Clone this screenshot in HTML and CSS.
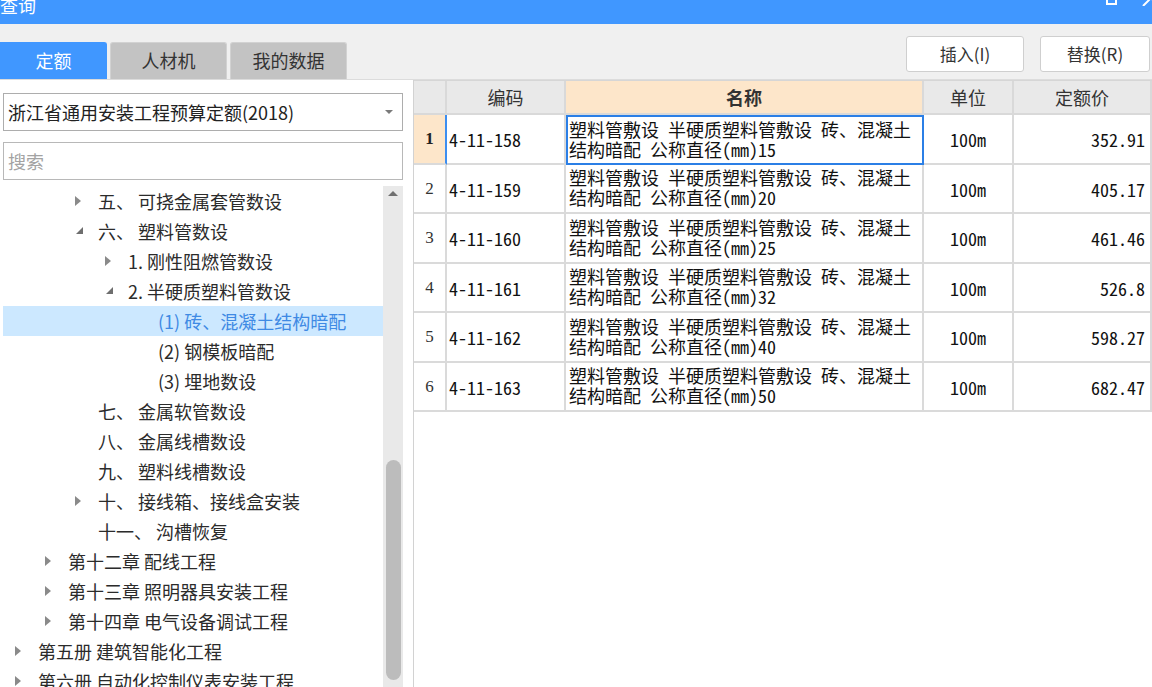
FILE: index.html
```html
<!DOCTYPE html>
<html lang="zh-CN">
<head>
<meta charset="utf-8">
<title>查询</title>
<link rel="stylesheet" href="styles.css">
</head>
<body>
<div class="window">
  <div class="titlebar">
    <span class="title">查询</span>
    <svg class="win-controls" width="60" height="16" viewBox="0 0 60 16">
      <rect x="15" y="2" width="9" height="12" fill="none" stroke="#fff" stroke-width="2"/>
      <path d="M51 16 L67 0 M51 0 L67 16" stroke="#fff" stroke-width="2" fill="none"/>
    </svg>
  </div>
  <div class="toolbar">
    <div class="tabs">
      <div class="tab active">定额</div>
      <div class="tab">人材机</div>
      <div class="tab">我的数据</div>
    </div>
    <div class="actions">
      <button class="btn btn-insert">插入(I)</button>
      <button class="btn btn-replace">替换(R)</button>
    </div>
  </div>
  <div class="main">
    <aside class="left">
      <div class="select">
        <span class="select-text">浙江省通用安装工程预算定额(2018)</span>
        <i class="select-arrow"></i>
      </div>
      <div class="search">搜索</div>
      <div class="tree-wrap">
        <ul class="tree">
          <li class="node l2"><i class="tw closed"></i><span>五、 可挠金属套管数设</span></li>
          <li class="node l2"><i class="tw open"></i><span>六、 塑料管数设</span></li>
          <li class="node l3"><i class="tw closed"></i><span>1. 刚性阻燃管数设</span></li>
          <li class="node l3"><i class="tw open"></i><span>2. 半硬质塑料管数设</span></li>
          <li class="node l4 selected"><i class="tw"></i><span>(1) 砖、混凝土结构暗配</span></li>
          <li class="node l4"><i class="tw"></i><span>(2) 钢模板暗配</span></li>
          <li class="node l4"><i class="tw"></i><span>(3) 埋地数设</span></li>
          <li class="node l2"><i class="tw"></i><span>七、 金属软管数设</span></li>
          <li class="node l2"><i class="tw"></i><span>八、 金属线槽数设</span></li>
          <li class="node l2"><i class="tw"></i><span>九、 塑料线槽数设</span></li>
          <li class="node l2"><i class="tw closed"></i><span>十、 接线箱、接线盒安装</span></li>
          <li class="node l2"><i class="tw"></i><span>十一、 沟槽恢复</span></li>
          <li class="node l1"><i class="tw closed"></i><span>第十二章 配线工程</span></li>
          <li class="node l1"><i class="tw closed"></i><span>第十三章 照明器具安装工程</span></li>
          <li class="node l1"><i class="tw closed"></i><span>第十四章 电气设备调试工程</span></li>
          <li class="node l0"><i class="tw closed"></i><span>第五册 建筑智能化工程</span></li>
          <li class="node l0"><i class="tw closed"></i><span>第六册 自动化控制仪表安装工程</span></li>
        </ul>
        <div class="vscroll">
          <i class="vs-up"></i>
          <div class="vs-thumb"></div>
        </div>
      </div>
    </aside>
    <section class="right">
      <div class="grid">
        <div class="hd rn"></div>
        <div class="hd">编码</div>
        <div class="hd name-hd">名称</div>
        <div class="hd">单位</div>
        <div class="hd">定额价</div>

        <div class="c rn rn-cur">1</div>
        <div class="c code">4-11-158</div>
        <div class="c name cur">塑料管敷设 半硬质塑料管敷设 砖、混凝土<br>结构暗配 公称直径(mm)15</div>
        <div class="c unit">100m</div>
        <div class="c price">352.91</div>

        <div class="c rn">2</div>
        <div class="c code">4-11-159</div>
        <div class="c name">塑料管敷设 半硬质塑料管敷设 砖、混凝土<br>结构暗配 公称直径(mm)20</div>
        <div class="c unit">100m</div>
        <div class="c price">405.17</div>

        <div class="c rn">3</div>
        <div class="c code">4-11-160</div>
        <div class="c name">塑料管敷设 半硬质塑料管敷设 砖、混凝土<br>结构暗配 公称直径(mm)25</div>
        <div class="c unit">100m</div>
        <div class="c price">461.46</div>

        <div class="c rn">4</div>
        <div class="c code">4-11-161</div>
        <div class="c name">塑料管敷设 半硬质塑料管敷设 砖、混凝土<br>结构暗配 公称直径(mm)32</div>
        <div class="c unit">100m</div>
        <div class="c price">526.8</div>

        <div class="c rn">5</div>
        <div class="c code">4-11-162</div>
        <div class="c name">塑料管敷设 半硬质塑料管敷设 砖、混凝土<br>结构暗配 公称直径(mm)40</div>
        <div class="c unit">100m</div>
        <div class="c price">598.27</div>

        <div class="c rn">6</div>
        <div class="c code">4-11-163</div>
        <div class="c name">塑料管敷设 半硬质塑料管敷设 砖、混凝土<br>结构暗配 公称直径(mm)50</div>
        <div class="c unit">100m</div>
        <div class="c price">682.47</div>
      </div>
    </section>
  </div>
</div>
</body>
</html>
```

FILE: styles.css
```css
* { box-sizing: border-box; margin: 0; padding: 0; }
html, body { width: 1152px; height: 687px; overflow: hidden; }
body {
  font-family: "Noto Sans CJK SC", "Noto Sans", sans-serif;
  background: #f0f0f0;
  color: #333;
}
.window { display: flex; flex-direction: column; height: 687px; }

/* title bar */
.titlebar {
  height: 24px; flex: none;
  background: #4097ff;
  display: flex; align-items: flex-start;
  overflow: hidden;
}
.title { color: #fff; font-size: 18px; line-height: 18px; margin-top: -4px; }
.win-controls { margin-left: auto; margin-top: -10px; display: block; }

/* toolbar */
.toolbar {
  height: 56px; flex: none;
  display: flex; align-items: flex-start;
  border-bottom: 1px solid #dcdcdc;
  background: #f0f0f0;
}
.tabs { display: flex; gap: 3px; margin-top: 18px; }
.tab {
  width: 117px; height: 37px;
  background: #c3c3c3;
  border: 1px solid #d2d2d2; border-bottom: none;
  border-radius: 3px 3px 0 0;
  font-size: 18px; line-height: 34px; text-align: center;
  color: #333;
}
.tab.active {
  width: 107px; background: #4097ff; border-color: #4097ff;
  color: #fff; border-radius: 0 3px 0 0;
}
.actions { margin-left: auto; margin-top: 12px; margin-right: 2px; display: flex; gap: 16px; }
.btn {
  height: 36px; width: 118px;
  background: #fff; border: 1px solid #cfcfcf; border-radius: 3px;
  font-family: "Noto Sans CJK SC", "Noto Sans", sans-serif;
  font-size: 17px; color: #333;
  padding-bottom: 2px;
}
.btn-replace { width: 110px; }

/* main */
.main { flex: 1; display: flex; min-height: 0; background: #fff; }
.left {
  width: 414px; flex: none;
  border-right: 1px solid #d2d2d2;
  padding-left: 3px;
  display: flex; flex-direction: column;
  background: #fff;
}
.select {
  margin-top: 13px; width: 400px; height: 38px;
  border: 1px solid #adadad;
  display: flex; align-items: center;
  padding-left: 4px;
}
.select-text { font-size: 18px; color: #222; }
.select-arrow {
  margin-left: auto; margin-right: 9px;
  width: 0; height: 0;
  border-left: 4px solid transparent; border-right: 4px solid transparent;
  border-top: 4px solid #7a7a7a;
}
.search {
  margin-top: 11px; width: 400px; height: 38px;
  border: 1px solid #b8b8b8;
  padding-left: 4px;
  font-size: 18px; line-height: 36px; color: #a3a3a3;
}
.tree-wrap { margin-top: 6px; flex: 1; min-height: 0; display: flex; overflow: hidden; }
.tree { list-style: none; width: 380px; flex: none; }
.node {
  height: 30px; display: flex; align-items: center;
  white-space: nowrap; font-size: 18px; color: #2b2b2b;
  padding-bottom: 1px;
}
.node.l0 { padding-left: 10px; }
.node.l1 { padding-left: 40px; }
.node.l2 { padding-left: 70px; }
.node.l3 { padding-left: 100px; }
.node.l4 { padding-left: 130px; }
.node.selected { background: #cce8ff; color: #3f8ae4; }
.tw { width: 25px; flex: none; height: 29px; display: flex; align-items: center; padding-left: 2px; }
.tw.closed::before {
  content: ""; width: 0; height: 0;
  border-left: 6px solid #8a8a8a;
  border-top: 5px solid transparent; border-bottom: 5px solid transparent;
}
.tw.open::before {
  content: ""; width: 0; height: 0; margin-left: 1px;
  border-bottom: 7px solid #6e6e6e;
  border-left: 7px solid transparent;
}
.vscroll {
  width: 20px; flex: none; background: #e9e9e9;
  display: flex; flex-direction: column; align-items: center;
}
.vs-up {
  margin-top: 5px; width: 0; height: 0;
  border-left: 5px solid transparent; border-right: 5px solid transparent;
  border-bottom: 5px solid #707070;
}
.vs-thumb {
  margin-top: 264px; width: 15px; height: 220px;
  background: #bcbcbc; border-radius: 8px;
}

/* right grid */
.right { flex: 1; min-width: 0; background: #fff; overflow: hidden; }
.grid {
  display: grid;
  grid-template-columns: 33px 119px 358px 90px 138px;
  grid-template-rows: 34px 50px 49px 50px 49px 50px 49px;
  border-top: 1px solid #d6d6d6;
}
.hd {
  background: #e9e9e9;
  border-right: 2px solid #d9d9d9; border-bottom: 2px solid #d9d9d9;
  font-size: 18px; color: #333;
  display: flex; align-items: center; justify-content: center;
}
.hd.name-hd { background: #fde6ca; font-weight: bold; }
.c {
  border-right: 2px solid #dadada; border-bottom: 2px solid #dadada;
  font-family: "Noto Sans Mono CJK SC", "Noto Sans CJK SC", monospace;
  font-size: 18px; color: #111;
  display: flex; align-items: center;
}
.c.rn {
  justify-content: center;
  font-family: "Liberation Serif", serif; font-size: 17px; color: #333;
}
.c.rn-cur { background: #fde6ca; font-weight: bold; color: #222; border-right-color: #3d8ef0; }
.c.code { padding-left: 2px; }
.c.name { padding-left: 3px; line-height: 20px; padding-bottom: 3px; }
.c.name.cur { border: 2px solid #2b7fe6; padding-left: 1px; }
.c.unit { justify-content: center; }
.c.price { justify-content: flex-end; padding-right: 5px; }
```
